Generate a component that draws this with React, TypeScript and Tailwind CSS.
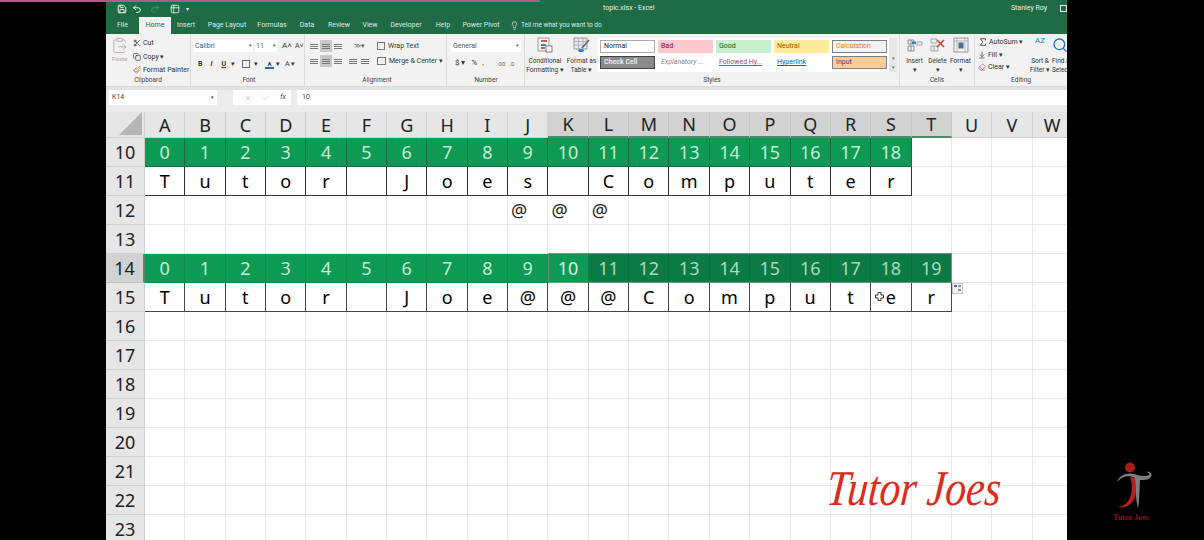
import React from 'react';
import { Save, Undo2, Redo2, Table2, Scissors, Copy, Paintbrush, ClipboardPaste, Lightbulb, X, Check, Search, Eraser, ArrowDownToLine, Sigma } from 'lucide-react';

const COLS = 'ABCDEFGHIJKLMNOPQRSTUVW'.split('');
const ROWS = [10, 11, 12, 13, 14, 15, 16, 17, 18, 19, 20, 21, 22, 23];
const TABS = [
  ['File', 'w-[33px]'],
  ['Home', 'w-[32px]'],
  ['Insert', 'w-[30px]'],
  ['Page Layout', 'w-[52px]'],
  ['Formulas', 'w-[38px]'],
  ['Data', 'w-[32px]'],
  ['Review', 'w-[32px]'],
  ['View', 'w-[30px]'],
  ['Developer', 'w-[42px]'],
  ['Help', 'w-[32px]'],
  ['Power Pivot', 'w-[44px]'],
];
const row10 = Array.from({ length: 19 }, (_, i) => String(i));
const row11 = 'Tutor Joes Computer'.split('');
const row14 = Array.from({ length: 20 }, (_, i) => String(i));
const row15 = 'Tutor Joe@@@Computer'.split('');

function cellFor(row: number, col: number) {
  let text = '';
  let cls = 'border-r border-b border-[#e8e8e8] text-black';
  if (row === 10 && col < 19) {
    text = row10[col];
    cls = 'border-r border-b border-[#1f6a45] bg-[#0d9a55] text-[#c5f0d4]';
  } else if (row === 11 && col < 19) {
    text = row11[col];
    cls = 'border-r border-b border-[#333] text-black';
  } else if (row === 14 && col < 20) {
    text = row14[col];
    cls =
      col < 10
        ? 'border-r border-b border-[#0b8a4c] bg-[#0d9a55] text-[#c5f0d4]'
        : col === 10
          ? 'border-r border-b border-[#0b7f47] bg-[#0d9a55] text-[#d6f5e0]'
          : 'border-r border-b border-[#0a7040] bg-[#0b7a44] text-[#a9dcbd]';
  } else if (row === 15 && col < 20) {
    text = row15[col];
    cls = 'border-r border-b border-[#444] text-black';
  } else if (row === 12 && col >= 9 && col <= 11) {
    return (
      <div key={col} className="flex items-center justify-start pl-[3px] border-r border-b border-[#e8e8e8] text-[#222]">
        @
      </div>
    );
  }
  return (
    <div key={col} className={`flex items-center justify-center ${cls}`}>
      {text.trim()}
    </div>
  );
}

function GroupLabel({ children }: { children: React.ReactNode }) {
  return <div className="h-[11px] text-center text-[6.5px] leading-[11px] text-[#444]">{children}</div>;
}

function Group({ label, className, children }: { label: string; className: string; children: React.ReactNode }) {
  return (
    <div className={`flex flex-col border-r border-[#dcdcdc] ${className}`}>
      <div className="flex-1 min-h-0">{children}</div>
      <GroupLabel>{label}</GroupLabel>
    </div>
  );
}

function AlignBars({ active }: { active?: boolean }) {
  return (
    <span className={`flex h-[12px] w-[12px] flex-col justify-center gap-[1px] px-[2px] ${active ? 'bg-[#c8c8c8]' : ''}`}>
      <span className="h-px bg-[#777]" />
      <span className="h-px bg-[#777]" />
      <span className="h-px bg-[#777]" />
    </span>
  );
}

function StyleChip({ text, className }: { text: string; className: string }) {
  return <div className={`flex h-[13px] w-[55px] items-center truncate pl-[3px] text-[7px] ${className}`}>{text}</div>;
}

function GridIcon({ kind }: { kind: 'insert' | 'delete' | 'format' | 'cond' | 'table' }) {
  return (
    <svg width="18" height="16" viewBox="0 0 18 16" className="mb-[4px] block" fill="none">
      {kind === 'cond' && (
        <>
          <rect x="2" y="1" width="11" height="13" fill="#f4f4f4" stroke="#777" strokeWidth="0.7" />
          <rect x="5" y="3" width="6" height="2" fill="#d9534f" />
          <rect x="5" y="7" width="5" height="2" fill="#4a7fc1" />
          <rect x="5" y="10" width="4" height="2" fill="#d9534f" />
          <rect x="10" y="9" width="6" height="6" fill="#fff" stroke="#555" strokeWidth="0.7" />
        </>
      )}
      {kind === 'table' && (
        <>
          <rect x="1" y="1" width="13" height="11" fill="#e4e9ef" stroke="#777" strokeWidth="0.7" />
          <path d="M1 4.5h13M1 8h13M5.5 1v11M10 1v11" stroke="#99a" strokeWidth="0.6" />
          <path d="M16 3 L9 11" stroke="#666" strokeWidth="1.5" />
          <ellipse cx="8" cy="13.5" rx="3" ry="1.6" fill="#2f7fd1" />
        </>
      )}
      {kind === 'insert' && (
        <>
          <path d="M2 3h6v4H2zM2 9h6v5H2zM5 9v5M5 3v4" stroke="#666" strokeWidth="0.7" />
          <rect x="6" y="4.5" width="4" height="2.5" fill="#2f7fd1" />
          <path d="M11 5h5v3h-5z" stroke="#888" strokeWidth="0.7" />
        </>
      )}
      {kind === 'delete' && (
        <>
          <path d="M2 2h6v4H2zM2 9h7v5H2zM5 9v5" stroke="#888" strokeWidth="0.7" />
          <path d="M8 3l7 7M15 3l-7 7" stroke="#d0492f" strokeWidth="1.6" />
        </>
      )}
      {kind === 'format' && (
        <>
          <rect x="2" y="1" width="14" height="14" stroke="#777" strokeWidth="0.7" />
          <path d="M2 4h14M5 1v14M13 1v14" stroke="#999" strokeWidth="0.6" />
          <rect x="6.5" y="5.5" width="5" height="6" fill="#4a6f96" />
        </>
      )}
    </svg>
  );
}

function TutorLogo() {
  return (
    <svg width="40" height="50" viewBox="0 0 40 50" className="block">
      <circle cx="14" cy="5.5" r="5" fill="#a81c1c" />
      <path d="M1 20 C3 13 11 10 18 12 C24 14 30 15 33 13 C34 12 32 10 30 10 C34 9 37 12 35 15 C33 18 28 18 24 18 L23 38 C23 42 22 45 22 47 C20 38 19 26 19 16 C13 13 6 14 1 20Z" fill="#7d7d7d" />
      <path d="M14 15 C17 24 16 34 12 39 C9 43 5 45 1 45 C10 47 19 42 20 30 L19 16Z" fill="#b51f1f" />
    </svg>
  );
}

export default function App() {
  return (
    <div className="relative flex h-[540px] w-[1204px] overflow-hidden bg-black font-['Noto_Sans',sans-serif]">
      <div className="absolute left-0 top-0 z-10 h-[2px] w-[540px] bg-[#b9568a]" />
      <div className="w-[106px] shrink-0" />

      <main className="relative flex w-[961px] shrink-0 flex-col overflow-hidden bg-white">
        <div className="flex flex-col font-['Roboto',sans-serif] blur-[0.35px]">
          <div className="flex h-[17px] items-center bg-[#1e6b46] text-[7px] text-[#e8f0ec]">
            <div className="flex w-[100px] items-center pl-[11px]">
              <Save size={10} strokeWidth={2.4} />
              <Undo2 size={10} strokeWidth={2.4} className="ml-[5px]" />
              <Redo2 size={10} strokeWidth={2} className="ml-[8px] opacity-30" />
              <Table2 size={10} strokeWidth={2} className="ml-[10px]" />
              <span className="ml-[6px] text-[6px]">▾</span>
            </div>
            <div className="flex-1 pl-[397px]">topic.xlsx - Excel</div>
            <div className="pr-[13px]">Stanley Roy</div>
            <div className="h-[7px] w-[7px] border border-[#e8f0ec]" />
          </div>

          <div className="flex h-[17px] items-end bg-[#1e6b46] text-[7px] text-[#dfeae4]">
            {TABS.map(([name, width]) => (
              <div
                key={name}
                className={`flex h-[17px] items-center justify-center ${width} ${name === 'Home' ? 'bg-[#f2f2f2] text-[#1e6b46]' : ''}`}
              >
                {name}
              </div>
            ))}
            <div className="ml-[7px] flex h-[17px] items-center gap-[2px] text-[6.5px]">
              <Lightbulb size={9} />
              Tell me what you want to do
            </div>
          </div>

          <div className="flex h-[52px] bg-[#f2f2f2] text-[7px] text-[#333]">
            <Group label="Clipboard" className="w-[85px]">
              <div className="flex h-full">
                <div className="flex w-[27px] flex-col items-center pt-[3px] text-[6px] text-[#aaa]">
                  <ClipboardPaste size={17} strokeWidth={1.2} />
                  Paste
                </div>
                <div className="flex flex-col gap-[3px] pt-[4px]">
                  <div className="flex items-center gap-[2px]"><Scissors size={8} />Cut</div>
                  <div className="flex items-center gap-[2px]"><Copy size={8} />Copy ▾</div>
                  <div className="flex items-center gap-[2px]"><Paintbrush size={8} className="text-[#b8802a]" />Format Painter</div>
                </div>
              </div>
            </Group>

            <Group label="Font" className="w-[114px] pl-[3px]">
              <div className="flex items-center gap-[2px] pt-[6px]">
                <div className="flex h-[12px] w-[59px] items-center justify-between bg-white px-[1px] text-[#555]">Calibri<span className="text-[5px]">▾</span></div>
                <div className="flex h-[12px] w-[22px] items-center justify-between bg-white px-[1px] text-[#555]">11<span className="text-[5px]">▾</span></div>
                <span className="ml-[3px] text-[8px]">A˄</span>
                <span className="ml-[1px] text-[7px]">A˅</span>
              </div>
              <div className="mt-[7px] flex items-center pl-[4px] font-bold">
                <span>B</span>
                <span className="ml-[8px] italic">I</span>
                <span className="ml-[9px] underline">U</span>
                <span className="ml-[5px] font-normal">▾</span>
                <span className="ml-[7px] h-[8px] w-[8px] border border-[#666]" />
                <span className="ml-[4px] font-normal">▾</span>
                <span className="ml-[7px] h-[9px] w-[9px] border-b-2 border-[#1c6fc0] text-center text-[6px] leading-[7px]">A</span>
                <span className="ml-[2px] font-normal">▾</span>
                <span className="ml-[5px] font-normal">A ▾</span>
              </div>
            </Group>

            <Group label="Alignment" className="w-[142px] pl-[3px]">
              <div className="flex items-center pt-[6px]">
                <AlignBars />
                <AlignBars active />
                <AlignBars />
                <span className="ml-[10px] w-[16px] text-[#666]">≫▾</span>
                <span className="ml-[7px] mr-[3px] h-[8px] w-[8px] border border-[#777]" />
                <span>Wrap Text</span>
              </div>
              <div className="mt-[3px] flex items-center">
                <AlignBars />
                <AlignBars active />
                <AlignBars />
                <span className="ml-[3px]"><AlignBars /></span>
                <AlignBars />
                <span className="ml-[6px] mr-[3px] h-[8px] w-[9px] border border-[#777]" />
                <span>Merge &amp; Center ▾</span>
              </div>
            </Group>

            <Group label="Number" className="w-[78px] pl-[4px] pr-[3px]">
              <div className="mt-[6px] flex h-[12px] items-center justify-between bg-white px-[2px] text-[#555]">General<span className="text-[5px]">▾</span></div>
              <div className="mt-[5px] flex items-center pl-[4px]">
                <span className="text-[8px]">$ ▾</span>
                <span className="ml-[6px] text-[8px]">%</span>
                <span className="ml-[5px] text-[8px]">,</span>
                <span className="ml-[13px] text-[6px] text-[#666]">.00</span>
                <span className="ml-[4px] text-[6px] text-[#666]">.0</span>
              </div>
            </Group>

            <Group label="Styles" className="w-[375px]">
              <div className="flex h-full">
                <div className="flex w-[40px] flex-col items-center pt-[3px] text-center text-[6.5px] leading-[9px]">
                  <GridIcon kind="cond" />
                  Conditional Formatting ▾
                </div>
                <div className="flex w-[33px] flex-col items-center pt-[3px] text-center text-[6.5px] leading-[9px]">
                  <GridIcon kind="table" />
                  Format as Table ▾
                </div>
                <div className="mt-[4px] grid h-[34px] w-[291px] grid-cols-5 gap-x-[3px] gap-y-[2px] bg-white p-[2px]">
                  <StyleChip text="Normal" className="border border-[#aaa] bg-white text-[#222]" />
                  <StyleChip text="Bad" className="bg-[#ffc7ce] text-[#9c0006]" />
                  <StyleChip text="Good" className="bg-[#c6efce] text-[#006100]" />
                  <StyleChip text="Neutral" className="bg-[#ffeb9c] text-[#9c5700]" />
                  <StyleChip text="Calculation" className="border border-[#7f7f7f] bg-[#f2f2f2] text-[#fa7d00]" />
                  <StyleChip text="Check Cell" className="border border-[#444] bg-[#8a8a8a] font-bold text-[#e8e8e8]" />
                  <StyleChip text="Explanatory ..." className="italic text-[#8a8a8a]" />
                  <StyleChip text="Followed Hy..." className="text-[#954f72] underline" />
                  <StyleChip text="Hyperlink" className="text-[#0563c1] underline" />
                  <StyleChip text="Input" className="border border-[#7f7f7f] bg-[#ffcc99] text-[#3f3f76]" />
                </div>
                <div className="mt-[4px] flex h-[34px] w-[8px] flex-col items-center justify-end bg-[#e6e6e6] text-[5px] leading-[9px] text-[#666]">
                  <span>▾</span>
                  <span>▾</span>
                </div>
              </div>
            </Group>

            <Group label="Cells" className="w-[75px]">
              <div className="flex pl-[3px] pt-[3px] text-center text-[6.5px] leading-[9px]">
                <div className="flex w-[23px] flex-col items-center"><GridIcon kind="insert" />Insert<span>▾</span></div>
                <div className="flex w-[23px] flex-col items-center"><GridIcon kind="delete" />Delete<span>▾</span></div>
                <div className="flex w-[23px] flex-col items-center"><GridIcon kind="format" />Format<span>▾</span></div>
              </div>
            </Group>

            <div className="flex min-w-0 flex-1 flex-col">
              <div className="flex flex-1 overflow-hidden pl-[3px] pt-[3px]">
                <div className="flex w-[50px] shrink-0 flex-col gap-[2px]">
                  <div className="flex items-center gap-[1px]"><Sigma size={10} />AutoSum ▾</div>
                  <div className="flex items-center gap-[2px]"><ArrowDownToLine size={8} />Fill ▾</div>
                  <div className="flex items-center gap-[2px]"><Eraser size={8} className="text-[#c0506a]" />Clear ▾</div>
                </div>
                <div className="flex w-[24px] shrink-0 flex-col items-center text-center text-[6.5px] leading-[9px]">
                  <span className="mb-[6px] h-[14px] text-[8px] leading-[8px] text-[#2a6fc0]">AZ</span>
                  Sort &amp;
                  <br />
                  Filter ▾
                </div>
                <div className="flex shrink-0 flex-col text-[6.5px] leading-[9px]">
                  <Search size={16} className="mb-[4px] text-[#2a6fc0]" />
                  <span>Find &amp;</span>
                  <span>Select ▾</span>
                </div>
              </div>
              <GroupLabel>Editing</GroupLabel>
            </div>
          </div>

          <div className="h-[4px] border-t border-[#d8d8d8] bg-[#e2e2e2]" />

          <div className="flex h-[15px] items-stretch gap-[6px] bg-[#ececec] pl-[3px] text-[7px] text-[#444]">
            <div className="flex w-[108px] items-center justify-between bg-white px-[3px]">K14<span className="text-[5px]">▾</span></div>
            <div className="ml-[10px] flex w-[58px] items-center justify-around bg-white pl-[6px] text-[#bbb]">
              <X size={8} />
              <Check size={8} />
              <span className="italic text-[#444]">fx</span>
            </div>
            <div className="flex flex-1 items-center bg-white pl-[5px]">10</div>
          </div>
          <div className="h-[7px] bg-[#ececec]" />
        </div>

        <div className="grid flex-1 grid-cols-[39px_repeat(23,40.35px)] grid-rows-[26px_repeat(14,29px)] overflow-hidden text-[18px] leading-none">
          <div className="relative border-r border-b border-[#cfcfcf] bg-[#e6e6e6]">
            <div className="absolute bottom-[2px] right-[2px] h-0 w-0 border-b-[23px] border-l-[23px] border-b-[#b5b5b5] border-l-transparent" />
          </div>
          {COLS.map((c, i) => (
            <div
              key={c}
              className={`flex items-center justify-center border-r text-[#222] ${i >= 10 && i <= 19 ? 'border-b-2 border-r-[#c4c4c4] border-b-[#4f8a6a] bg-[#d2d2d2]' : 'border-b border-[#cfcfcf] bg-[#e6e6e6]'}`}
            >
              {c}
            </div>
          ))}
          {ROWS.map((r) => (
            <React.Fragment key={r}>
              <div
                className={`flex items-center justify-center border-b text-[#222] ${r === 14 ? 'border-r-2 border-r-[#4f8a6a] border-b-[#c4c4c4] bg-[#d2d2d2]' : 'border-r border-[#cfcfcf] bg-[#e6e6e6]'}`}
              >
                {r}
              </div>
              {COLS.map((_, col) => cellFor(r, col))}
            </React.Fragment>
          ))}
        </div>

        <div className="absolute left-[442px] top-[253px] h-[30px] w-[404px] border border-[#5f9f7c]" />
        <div className="absolute left-[846px] top-[283px] h-[11px] w-[11px] border border-[#c4c4c4] bg-[#f2f2f2]">
          <svg width="9" height="9" viewBox="0 0 9 9" className="block">
            <rect x="1" y="1" width="3" height="2" fill="#4a6a9a" />
            <rect x="5" y="1" width="3" height="2" fill="#8a9ab5" />
            <rect x="5" y="5" width="3" height="2" fill="#8a9ab5" />
          </svg>
        </div>
        <svg width="9" height="9" viewBox="0 0 9 9" className="absolute left-[769px] top-[292px]">
          <path d="M3 0.5h3v2.5h2.5v3H6v2.5H3V6H0.5V3H3Z" fill="#fff" stroke="#333" strokeWidth="1" />
        </svg>
        <div className="absolute left-[721px] top-[460px] origin-left -skew-x-6 scale-x-[0.83] whitespace-nowrap font-['Liberation_Serif',serif] text-[50px] italic leading-[56px] text-[#df2a1c]">
          Tutor Joes
        </div>
      </main>

      <aside className="flex flex-1 flex-col items-center justify-end pb-[18px]">
        <TutorLogo />
        <div className="mr-[9px] mt-[2px] font-['Liberation_Serif',serif] text-[8px] font-bold leading-[8px] text-[#8f1414]">Tutor Joes</div>
      </aside>
    </div>
  );
}
